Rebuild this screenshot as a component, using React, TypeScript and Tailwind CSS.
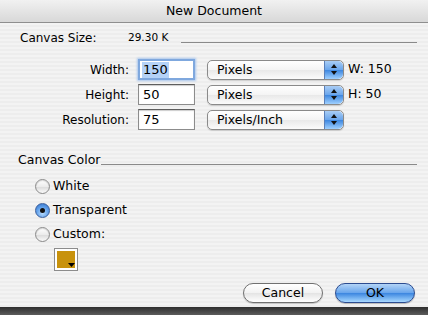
import React from "react";

function Stepper() {
  return (
    <div className="h-full w-[19px] rounded-r-[5px] border-l border-[#5a7fb8] bg-[image:linear-gradient(#a9cdf5_0%,#6ba6ec_48%,#3f88e0_52%,#9fd0ff_100%)] flex flex-col items-center justify-center gap-[3px]">
      <svg width="6" height="4" viewBox="0 0 6 4">
        <path d="M3 0 L6 4 L0 4 Z" fill="#111" />
      </svg>
      <svg width="6" height="4" viewBox="0 0 6 4">
        <path d="M0 0 L6 0 L3 4 Z" fill="#111" />
      </svg>
    </div>
  );
}

function Popup({ label }: { label: string }) {
  return (
    <div className="ml-[12px] w-[137px] h-[20px] flex items-stretch rounded-[5px] border border-[#8a8a8a] bg-[image:linear-gradient(#ffffff_0%,#f4f4f4_50%,#e9e9e9_52%,#fbfbfb_100%)] shadow-[0_1px_1px_rgba(0,0,0,0.15)]">
      <span className="flex-1 pl-[9px] text-[12.5px] leading-[18px]">{label}</span>
      <Stepper />
    </div>
  );
}

function Field({ value, focused }: { value: string; focused?: boolean }) {
  return (
    <div
      className={
        focused
          ? "ml-[9px] w-[57px] h-[21px] border-[2px] border-[#7fa8de] shadow-[0_0_2px_1px_#a9c6ee] bg-white flex items-center pl-[2px]"
          : "ml-[9px] w-[57px] h-[21px] border border-[#8c8c8c] border-t-[#5e5e5e] bg-white shadow-[inset_0_1px_1px_rgba(0,0,0,0.2)] flex items-center pl-[3px]"
      }
    >
      <span className={focused ? "bg-[#b4d2f7] text-[13px] leading-[16px] px-[1px]" : "text-[13px] leading-[16px] px-[1px]"}>
        {value}
      </span>
    </div>
  );
}

function Row({ label, value, unit, extra, focused }: { label: string; value: string; unit: string; extra?: string; focused?: boolean }) {
  return (
    <div className="flex items-center h-[21px]">
      <span className="w-[129px] text-right text-[12px]">{label}</span>
      <Field value={value} focused={focused} />
      <Popup label={unit} />
      {extra && <span className="ml-[4px] text-[12.5px]">{extra}</span>}
    </div>
  );
}

function Radio({ label, checked }: { label: string; checked?: boolean }) {
  return (
    <div className="flex items-center h-[16px] pl-[35px]">
      {checked ? (
        <div className="w-[15px] h-[15px] rounded-full border border-[#3b5f9c] bg-[image:radial-gradient(circle_at_50%_70%,#b8dcff_0%,#5d9de8_55%,#2f6fc8_100%)] flex items-center justify-center">
          <div className="w-[5px] h-[5px] rounded-full bg-[#111]" />
        </div>
      ) : (
        <div className="w-[15px] h-[15px] rounded-full border border-[#8a8a8a] bg-[image:linear-gradient(#ffffff_0%,#ececec_50%,#dcdcdc_55%,#fafafa_100%)] shadow-[inset_0_1px_1px_rgba(0,0,0,0.15)]" />
      )}
      <span className="ml-[3px] text-[12.5px]">{label}</span>
    </div>
  );
}

export default function App() {
  return (
    <div className="w-[428px] h-[315px] flex flex-col text-black font-['DejaVu_Sans',sans-serif]">
      {/* title bar */}
      <div className="h-[23px] shrink-0 flex items-center justify-center border-b border-[#8e8e8e] bg-[image:linear-gradient(#f1f1f1,#d8d8d8)]">
        <span className="text-[12.5px]">New Document</span>
      </div>

      <div className="flex-1 flex flex-col bg-[image:repeating-linear-gradient(0deg,#ededed_0px,#ededed_2px,#f3f3f3_2px,#f3f3f3_4px)]">
        <div className="mt-[7px] h-[16px] flex items-center pl-[20px] pr-[11px]">
          <span className="w-[108px] text-[12px]">Canvas Size:</span>
          <span className="w-[53px] text-[10.5px]">29.30 K</span>
          <div className="flex-1 h-px bg-[#8a8a8a] mt-[9px]" />
        </div>

        <div className="mt-[13px] flex flex-col gap-[4px]">
          <Row label="Width:" value="150" unit="Pixels" extra="W: 150" focused />
          <Row label="Height:" value="50" unit="Pixels" extra="H: 50" />
          <Row label="Resolution:" value="75" unit="Pixels/Inch" />
        </div>

        <div className="mt-[22px] h-[16px] flex items-center pl-[18px] pr-[11px]">
          <span className="text-[12.5px]">Canvas Color</span>
          <div className="flex-1 h-px bg-[#8a8a8a] mt-[9px]" />
        </div>

        <div className="mt-[10px] flex flex-col gap-[8px]">
          <Radio label="White" />
          <Radio label="Transparent" checked />
          <Radio label="Custom:" />
        </div>

        <div className="mt-[6px] pl-[54px]">
          <div className="relative w-[24px] h-[23px] border border-[#8c8c8c] bg-white p-[2px]">
            <div className="w-full h-full bg-[#c8920c]" />
            <svg className="absolute right-[2px] bottom-[2px]" width="7" height="5" viewBox="0 0 7 5">
              <path d="M0 0 L7 0 L3.5 4 Z" fill="#000" />
            </svg>
          </div>
        </div>

        <div className="mt-[12px] flex justify-end pr-[13px] gap-[12px]">
          <button className="w-[80px] h-[20px] rounded-full border border-[#707070] bg-[image:linear-gradient(#ffffff_0%,#f2f2f2_48%,#e4e4e4_52%,#ffffff_100%)] text-[12.5px] leading-[18px] shadow-[0_1px_1px_rgba(0,0,0,0.2)]">
            Cancel
          </button>
          <button className="w-[80px] h-[20px] rounded-full border border-[#2c4c90] bg-[image:linear-gradient(#b3d4f7_0%,#6aa6ec_48%,#3d87e0_52%,#a8d8ff_100%)] text-[12.5px] leading-[18px] shadow-[0_1px_1px_rgba(0,0,0,0.25)]">
            OK
          </button>
        </div>
      </div>

      <div className="h-[8px] shrink-0 bg-[image:linear-gradient(#2e2e2e,#5c5c5c)]" />
    </div>
  );
}
